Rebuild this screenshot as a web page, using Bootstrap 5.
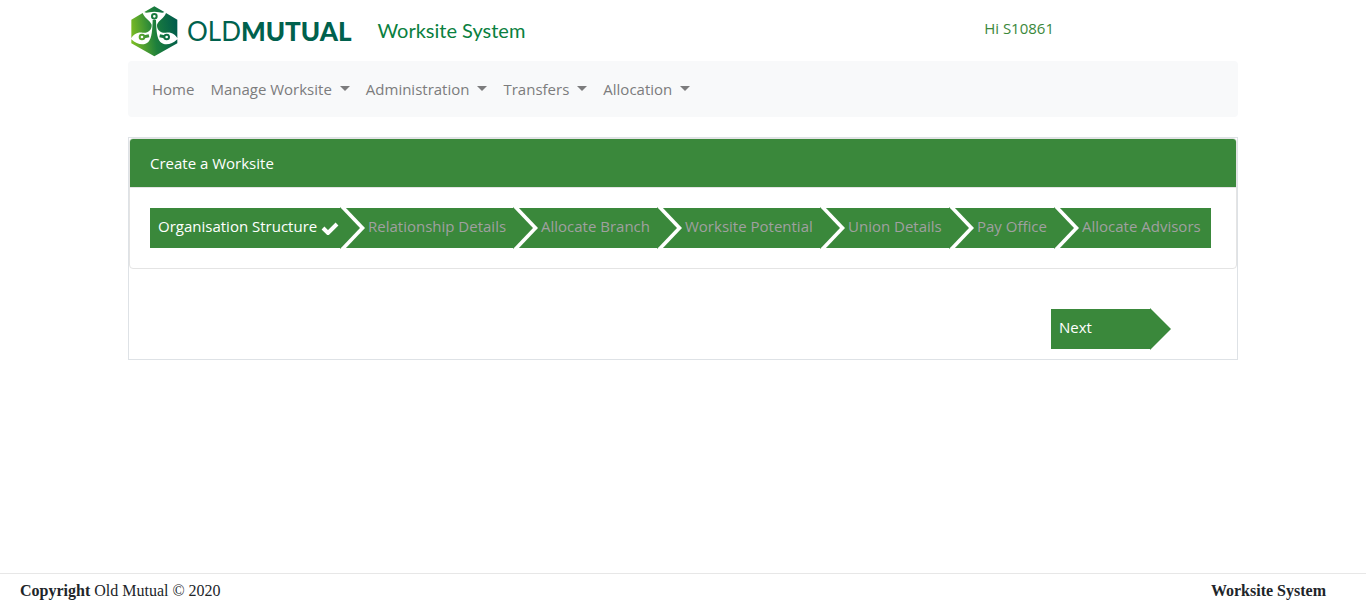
<!DOCTYPE html>
<html lang="en">
<head>
<meta charset="utf-8">
<meta name="viewport" content="width=device-width, initial-scale=1">
<title>Worksite System</title>
<link href="https://cdn.jsdelivr.net/npm/bootstrap@5.3.0/dist/css/bootstrap.min.css" rel="stylesheet">
<style>
  :root { --om-green: #3a883b; }
  body { font-family: "Open Sans", "Noto Sans", sans-serif; font-size: 15px; line-height: 24px; }
  .container { --bs-gutter-x: 30px; }
  .site-head { height: 61px; }
  .brand-word { font: 400 26px/30px Lato, sans-serif; color: #00614d; margin-left: 7px; }
  .brand-word b { font-weight: 900; }
  .app-title { font: 400 20px/28px Lato, sans-serif; color: #0a8040; margin-left: 26px; padding-bottom: 2px; }
  .greeting { color: var(--om-green); margin-right: 184px; padding-bottom: 6px; }
  .main-nav { --bs-navbar-color: #7c7c7d; --bs-navbar-hover-color: #4d4d4d; background: #f8f9fa; border-radius: 4px; }
  .main-nav .dropdown-toggle::after { margin-left: 8px; vertical-align: 4px; border-width: 5px 5px 0; }
  .panel { border: 1px solid #dee2e6; margin-top: 20px; padding-bottom: 10px; }
  .panel .card { --bs-card-border-color: #e4e4e4; --bs-card-border-radius: 4px; --bs-card-inner-border-radius: 3px; }
  .panel .card-header { background: var(--om-green); color: #fff; padding: 12px 20px; border-color: #e4e4e4; }
  .panel .card-body { padding: 20px 25px 20px 20px; }
  .steps { display: grid; grid-template-columns: minmax(0, 192fr) 173fr 144fr 163fr 129fr 105fr 155fr; }
  .steps a, .next-btn { position: relative; display: block; height: 40px; padding: 6px 8px 10px; background: var(--om-green); color: #a0a0a0; text-decoration: none; white-space: nowrap; }
  .steps li + li a { padding-left: 26px; }
  .steps a.current { color: #fff; padding-right: 0; }
  .steps li:not(:last-child) a::before, .steps li:not(:last-child) a::after, .next-btn::after { content: ""; position: absolute; z-index: 2; top: -1px; left: calc(100% - 2px); width: 20px; height: 42px; clip-path: polygon(0 0, 100% 50%, 0 100%); background: var(--om-green); }
  .steps li:not(:last-child) a::before { z-index: 1; width: 25px; background: #fff; clip-path: polygon(0 0, 5px 0, 100% 50%, 5px 100%, 0 100%); }
  .next-btn::after { left: calc(100% - 1px); width: 21px; }
  .next-btn { width: 100px; border: 0; color: #fff; text-align: left; margin: 40px 86px 0 auto; }
  .site-foot { border-top: 1px solid #e7e7e7; font: 16px/24px "Liberation Serif", serif; color: #212529; padding: 5px 40px 10px 20px; }
</style>
</head>
<body class="d-flex flex-column min-vh-100">
<header class="container">
  <div class="site-head d-flex align-items-center">
    <a href="#" class="d-flex align-items-center text-decoration-none" aria-label="Old Mutual">
      <svg width="52" height="54" viewBox="0 0 156 162" aria-hidden="true">
        <defs><linearGradient id="om" gradientUnits="userSpaceOnUse" x1="11" y1="90" x2="147" y2="70"><stop offset="0" stop-color="#7abb24"/><stop offset=".5" stop-color="#1d7f3c"/><stop offset="1" stop-color="#005c4b"/></linearGradient></defs>
        <g fill="url(#om)">
          <path d="M10 47 44 27C49 42 65 48 71 62 72 78 60 88 44 86 26 84 16 92 10 103Z"/>
          <path d="M148 47 114 27C109 42 93 48 87 62 86 78 98 88 114 86 132 84 142 92 148 103Z"/>
          <path d="M49 24 79 7 109 24C102 29 94 23 79 23 64 23 56 29 49 24Z"/>
          <path d="M10 106C27 122 48 126 61 114 72 102 73 76 74 48H84C85 76 86 102 97 114 110 126 131 122 148 106V118L79 157 10 118Z"/>
        </g>
        <g fill="none" stroke="url(#om)" stroke-width="6">
          <circle cx="79" cy="37" r="7" stroke="#187a3d"/>
          <circle cx="42" cy="99" r="7"/><path stroke-width="9" d="M49 98 63 95"/>
          <circle cx="116" cy="99" r="7"/><path stroke-width="9" d="M109 98 95 95"/>
        </g>
      </svg>
      <span class="brand-word">OLD<b>MUTUAL</b></span>
    </a>
    <span class="app-title">Worksite System</span>
    <span class="greeting ms-auto">Hi S10861</span>
  </div>
  <nav class="navbar navbar-expand main-nav px-3 py-2">
    <ul class="navbar-nav">
      <li class="nav-item"><a class="nav-link" href="#">Home</a></li>
      <li class="nav-item dropdown"><a class="nav-link dropdown-toggle" href="#" role="button" data-bs-toggle="dropdown">Manage Worksite</a></li>
      <li class="nav-item dropdown"><a class="nav-link dropdown-toggle" href="#" role="button" data-bs-toggle="dropdown">Administration</a></li>
      <li class="nav-item dropdown"><a class="nav-link dropdown-toggle" href="#" role="button" data-bs-toggle="dropdown">Transfers</a></li>
      <li class="nav-item dropdown"><a class="nav-link dropdown-toggle" href="#" role="button" data-bs-toggle="dropdown">Allocation</a></li>
    </ul>
  </nav>
</header>
<main class="container">
  <div class="panel">
    <section class="card">
      <div class="card-header">Create a Worksite</div>
      <div class="card-body">
        <ol class="steps list-unstyled mb-0">
          <li><a class="current" href="#">Organisation Structure <svg width="18" height="14" viewBox="0 0 18 14" aria-hidden="true"><path d="M2 7 7 12 16 3" fill="none" stroke="#fff" stroke-width="4"/></svg></a></li>
          <li><a href="#">Relationship Details</a></li>
          <li><a href="#">Allocate Branch</a></li>
          <li><a href="#">Worksite Potential</a></li>
          <li><a href="#">Union Details</a></li>
          <li><a href="#">Pay Office</a></li>
          <li><a href="#">Allocate Advisors</a></li>
        </ol>
      </div>
    </section>
    <button type="button" class="next-btn">Next</button>
  </div>
</main>
<footer class="site-foot mt-auto d-flex justify-content-between">
  <span><b>Copyright</b> Old Mutual © 2020</span>
  <b>Worksite System</b>
</footer>
<script src="https://cdn.jsdelivr.net/npm/bootstrap@5.3.0/dist/js/bootstrap.bundle.min.js"></script>
</body>
</html>
